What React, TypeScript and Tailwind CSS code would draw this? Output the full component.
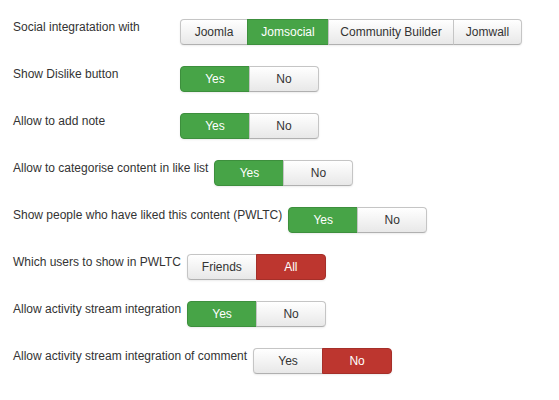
import { useState } from 'react';

type Opt = { label: string; tone?: 'green' | 'red'; w?: string };

const yesNo: Opt[] = [
  { label: 'Yes', tone: 'green' },
  { label: 'No', tone: 'red' },
];

const rows: { label: string; options: Opt[]; active: number }[] = [
  {
    label: 'Social integratation with',
    options: [
      { label: 'Joomla', w: 'w-[68px]' },
      { label: 'Jomsocial', tone: 'green', w: 'w-[82px]' },
      { label: 'Community Builder', w: 'w-[126px]' },
      { label: 'Jomwall', w: 'w-[69px]' },
    ],
    active: 1,
  },
  { label: 'Show Dislike button', options: yesNo, active: 0 },
  { label: 'Allow to add note', options: yesNo, active: 0 },
  { label: 'Allow to categorise content in like list', options: yesNo, active: 0 },
  { label: 'Show people who have liked this content (PWLTC)', options: yesNo, active: 0 },
  {
    label: 'Which users to show in PWLTC',
    options: [
      { label: 'Friends', tone: 'green' },
      { label: 'All', tone: 'red' },
    ],
    active: 1,
  },
  { label: 'Allow activity stream integration', options: yesNo, active: 0 },
  { label: 'Allow activity stream integration of comment', options: yesNo, active: 1 },
];

function ButtonGroup({ options, initial }: { options: Opt[]; initial: number }) {
  const [active, setActive] = useState(initial);

  return (
    <div className="flex h-[26px] rounded-[4px] shadow-[0_1px_2px_rgba(0,0,0,0.08)]">
      {options.map((opt, i) => {
        const on = i === active;
        const first = i === 0;
        const last = i === options.length - 1;
        let look =
          'bg-gradient-to-b from-white to-[#e8e8e8] text-[#333] border-[#c5c5c5] border-b-[#b0b0b0]';
        if (on && opt.tone === 'green') look = 'bg-[#47a447] text-white border-[#3d8f3d]';
        if (on && opt.tone === 'red') look = 'bg-[#bd362f] text-white border-[#a52f29]';
        return (
          <button
            key={opt.label}
            onClick={() => setActive(i)}
            className={`flex items-center justify-center border text-[12px] leading-none ${look} ${
              opt.w ?? 'w-[70px]'
            } ${first ? 'rounded-l-[4px]' : '-ml-px'} ${last ? 'rounded-r-[4px]' : ''}`}
          >
            {opt.label}
          </button>
        );
      })}
    </div>
  );
}

export default function App() {
  return (
    <div
      className="min-h-[400px] bg-white pl-[13px] pt-[19px] text-[12px] text-[#333]"
      style={{ fontFamily: '"Liberation Sans", Arial, sans-serif' }}
    >
      <div className="flex flex-col gap-[21px]">
        {rows.map((row) => (
          <div key={row.label} className="flex items-start">
            {/* labels longer than the column push their buttons right */}
            <label className="min-w-[167px] pr-[6px] leading-[16px]">{row.label}</label>
            <ButtonGroup options={row.options} initial={row.active} />
          </div>
        ))}
      </div>
    </div>
  );
}
